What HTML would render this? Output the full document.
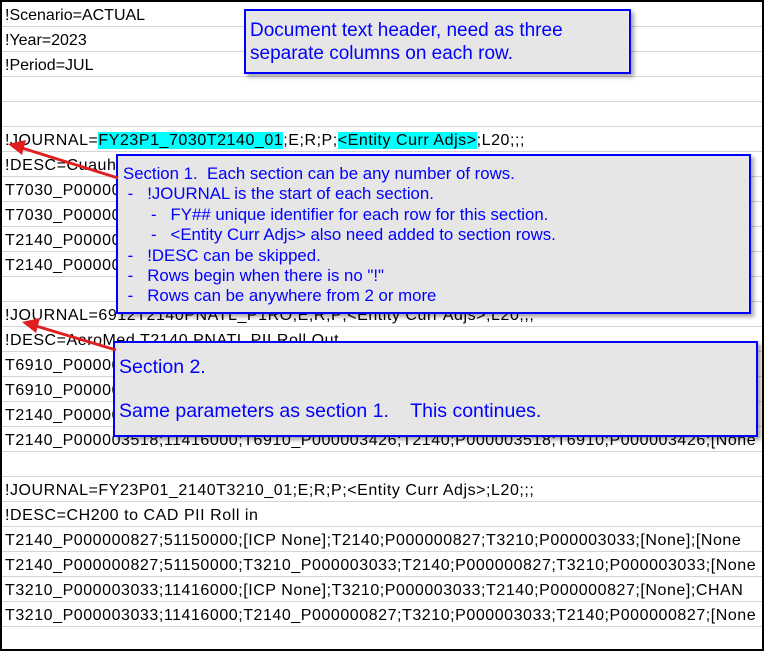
<!DOCTYPE html>
<html><head><meta charset="utf-8"><style>
html,body{margin:0;padding:0;background:#fff;}
body{width:764px;height:651px;position:relative;overflow:hidden;font-family:"Liberation Sans",Arial,sans-serif;}
#frame{position:absolute;left:0;top:0;width:760px;height:647px;border:2px solid #000;overflow:hidden;}
.row{position:absolute;left:0;width:760px;height:25px;border-bottom:1px solid #d4d4d4;font-size:16px;line-height:28px;white-space:nowrap;color:#000;padding-left:3px;box-sizing:border-box;}
.w{letter-spacing:0.55px;}
.hl{background:#00ffff;}
.box{position:absolute;background:#e6e6e6;border:2px solid #0000ff;color:#0000ff;box-shadow:3px 3px 4px rgba(0,0,0,.35);box-sizing:border-box;}
</style></head><body>
<div id="frame">
<div class="row" style="top:0">!Scenario=ACTUAL</div>
<div class="row" style="top:25px">!Year=2023</div>
<div class="row" style="top:50px">!Period=JUL</div>
<div class="row" style="top:75px"></div>
<div class="row" style="top:100px"></div>
<div class="row w" style="top:125px">!JOURNAL=<span class="hl">FY23P1_7030T2140_01</span>;E;R;P;<span class="hl">&lt;Entity Curr Adjs&gt;</span>;L20;;;</div>
<div class="row w" style="top:150px">!DESC=Cuauhtemoc T7030 to T2140 Roll</div>
<div class="row w" style="top:175px">T7030_P000003426;11416000;[ICP None];T7030;P000003426;T2140;[None];[None</div>
<div class="row w" style="top:200px">T7030_P000003426;11416000;T2140_P000003518;T7030;P000003426;[None];[No</div>
<div class="row w" style="top:225px">T2140_P000003518;11416000;[ICP None];T2140;P000003518;T7030;[None];[None</div>
<div class="row w" style="top:250px">T2140_P000003518;11416000;T7030_P000003426;T2140;P000003518;[None];[No</div>
<div class="row" style="top:275px"></div>
<div class="row w" style="top:300px">!JOURNAL=6912T2140PNATL_P1RO;E;R;P;&lt;Entity Curr Adjs&gt;;L20;;;</div>
<div class="row w" style="top:325px">!DESC=AeroMed T2140 PNATL PII Roll Out</div>
<div class="row w" style="top:350px">T6910_P000003426;11416000;[ICP None];T6910;P000003426;T2140;[None];[None</div>
<div class="row w" style="top:375px">T6910_P000003426;11416000;T2140_P000003518;T6910;P000003426;[None];[No</div>
<div class="row w" style="top:400px">T2140_P000003518;11416000;[ICP None];T2140;P000003518;T6910;[None];[None</div>
<div class="row w" style="top:425px">T2140_P000003518;11416000;T6910_P000003426;T2140;P000003518;T6910;P000003426;[None</div>
<div class="row" style="top:450px"></div>
<div class="row w" style="top:475px">!JOURNAL=FY23P01_2140T3210_01;E;R;P;&lt;Entity Curr Adjs&gt;;L20;;;</div>
<div class="row w" style="top:500px">!DESC=CH200 to CAD PII Roll in</div>
<div class="row w" style="top:525px">T2140_P000000827;51150000;[ICP None];T2140;P000000827;T3210;P000003033;[None];[None</div>
<div class="row w" style="top:550px">T2140_P000000827;51150000;T3210_P000003033;T2140;P000000827;T3210;P000003033;[None</div>
<div class="row w" style="top:575px">T3210_P000003033;11416000;[ICP None];T3210;P000003033;T2140;P000000827;[None];CHAN</div>
<div class="row w" style="top:600px">T3210_P000003033;11416000;T2140_P000000827;T3210;P000003033;T2140;P000000827;[None</div>
</div>

<div class="box" style="left:244px;top:9px;width:387px;height:65px;font-size:19px;line-height:23px;padding:8px 0 0 4px;">Document text header, need as three<br>separate columns on each row.</div>

<div class="box" style="left:116px;top:154px;width:635px;height:160px;font-size:16.8px;line-height:20.4px;padding:8px 0 0 5px;white-space:pre;">Section 1.  Each section can be any number of rows.
 -   !JOURNAL is the start of each section.
      -   FY## unique identifier for each row for this section.
      -   &lt;Entity Curr Adjs&gt; also need added to section rows.
 -   !DESC can be skipped.
 -   Rows begin when there is no "!"
 -   Rows can be anywhere from 2 or more</div>

<div class="box" style="left:113px;top:341px;width:645px;height:96px;font-size:19.5px;line-height:22px;padding:13px 0 0 4px;white-space:pre;">Section 2.

Same parameters as section 1.    This continues.</div>

<svg style="position:absolute;left:0;top:0" width="764" height="651">
<g stroke="#e02020" stroke-width="3" fill="#e02020">
<line x1="118" y1="178" x2="22" y2="148"/>
<polygon points="8,144 26,140 22,155" stroke="none"/>
<line x1="116" y1="350" x2="36" y2="326"/>
<polygon points="22,322 40,318 36,333" stroke="none"/>
</g>
</svg>
</body></html>
